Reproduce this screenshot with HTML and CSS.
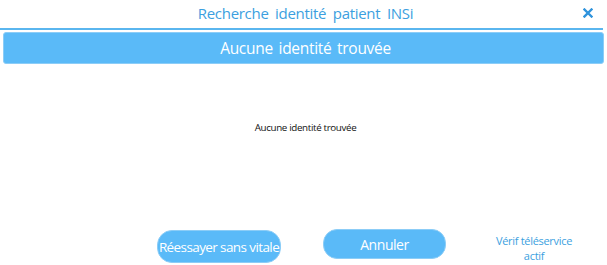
FILE: index.html
```html
<!DOCTYPE html>
<html lang="fr">
<head>
<meta charset="utf-8">
<link rel="stylesheet" href="styles.css">
</head>
<body>
<div class="dialog">
  <header class="titlebar">
    <span class="title">Recherche identité patient INSi</span>
    <button class="close" aria-label="Fermer">
      <svg width="10" height="10" viewBox="0 0 10 10"><path d="M1.5 1.5 L8.5 8.5 M8.5 1.5 L1.5 8.5" stroke="#2f93dc" stroke-width="2.4" stroke-linecap="square"/></svg>
    </button>
  </header>
  <div class="banner">Aucune identité trouvée</div>
  <main class="content">
    <p class="message">Aucune identité trouvée</p>
  </main>
  <footer class="actions">
    <button class="btn btn-retry">Réessayer sans vitale</button>
    <button class="btn btn-cancel">Annuler</button>
    <a class="link" href="#">Vérif téléservice<br>actif</a>
  </footer>
</div>
</body>
</html>
```

FILE: styles.css
```css
* { box-sizing: border-box; }
html, body { margin: 0; padding: 0; background: #fff; }
body { font-family: "Open Sans", "Noto Sans", sans-serif; }
.dialog {
  width: 607px;
  height: 265px;
  display: flex;
  flex-direction: column;
  overflow: hidden;
}
.titlebar {
  height: 30px;
  border-bottom: 2px solid #5ab6ef;
  margin-right: 4px;
  display: flex;
  align-items: center;
  justify-content: center;
  position: relative;
}
.title {
  font-size: 15px;
  color: #3c9fe0;
  word-spacing: 3px;
  letter-spacing: -0.3px;
  margin-left: 8px;
  margin-top: -2px;
}
.close {
  position: absolute;
  right: 10px;
  top: 8px;
  border: 0;
  background: none;
  padding: 0;
  width: 10px;
  height: 10px;
  display: flex;
}
.banner {
  margin: 2px 3px 0 3px;
  height: 32px;
  background: #5abaf8;
  border: 1px solid #8ccdf7;
  border-radius: 3px;
  color: #fff;
  font-size: 15.5px;
  word-spacing: 2px;
  letter-spacing: -0.3px;
  display: flex;
  align-items: center;
  justify-content: center;
  padding-left: 4px;
}
.content {
  flex: 1;
  display: flex;
  justify-content: center;
  align-items: flex-start;
}
.message {
  margin: 57px 0 0 4px;
  font-size: 9.8px;
  color: #111;
  letter-spacing: -0.35px;
}
.actions {
  height: 36px;
  display: flex;
  align-items: flex-start;
  padding-left: 157px;
}
.btn {
  font-family: "Open Sans", "Noto Sans", sans-serif;
  background: #5abaf8;
  color: #fff;
  border: 1px solid #8ccdf7;
  border-radius: 15px;
  padding: 0;
  font-size: 14px;
  letter-spacing: -0.45px;
  white-space: nowrap;
  display: flex;
  align-items: center;
  justify-content: center;
}
.btn-retry {
  width: 124px;
  height: 33px;
  margin-top: 1px;
  font-size: 13.5px;
  letter-spacing: -0.6px;
}
.btn-cancel {
  width: 123px;
  height: 30px;
  margin-left: 42px;
  border-radius: 14px;
}
.link {
  margin-left: 47px;
  margin-top: 4px;
  width: 82px;
  text-align: center;
  font-size: 11px;
  line-height: 15px;
  color: #3c9fe0;
  text-decoration: none;
  letter-spacing: -0.3px;
}
```
